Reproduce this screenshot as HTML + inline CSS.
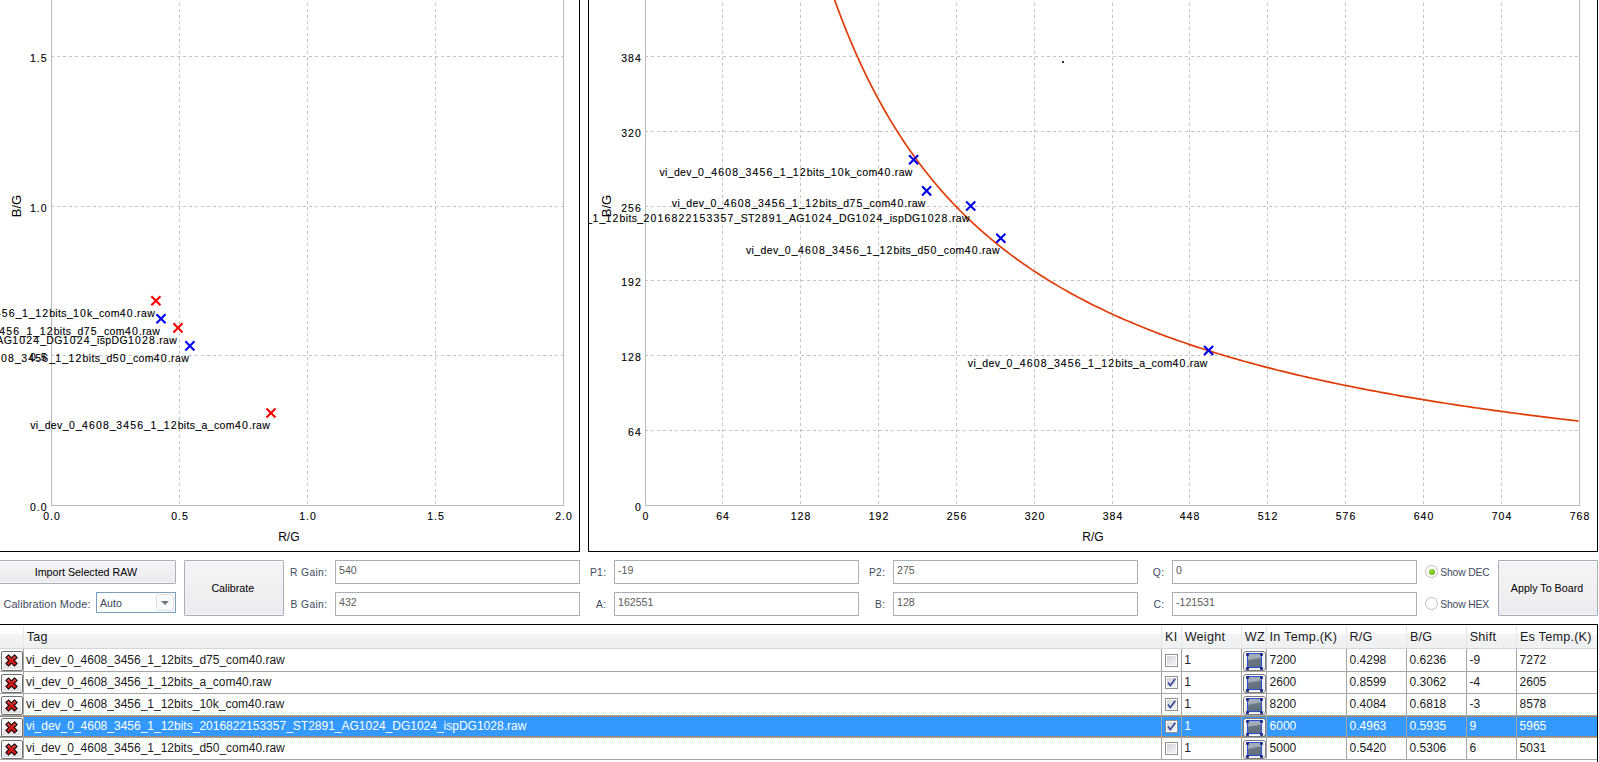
<!DOCTYPE html><html><head><meta charset="utf-8"><style>
*{margin:0;padding:0;box-sizing:border-box}
html,body{width:1599px;height:762px;overflow:hidden;background:#fff;position:relative;font-family:'Liberation Sans',sans-serif}
.a{position:absolute}
.t{position:absolute;white-space:pre;line-height:1}
.btn{position:absolute;border:1px solid #aaaeb8;border-radius:1px;background:linear-gradient(#f4f4f6,#ececf0);box-shadow:inset 0 1px 0 #fff,inset 0 -1px 0 #f6f6f8}
.tb{position:absolute;border:1px solid #a9afb7;background:#fff}
.lbl{color:#3d4b60;font-size:10.3px;letter-spacing:0.35px}
.val{color:#5c5c5c;font-size:10.6px}
.bt{color:#000;font-size:10.7px}
.hd{color:#1a1a1a;font-size:12.6px;letter-spacing:0.25px}
.rw{color:#1a1a1a;font-size:12px}
</style></head><body>
<svg class="a" style="left:0;top:0" width="1599" height="552" shape-rendering="crispEdges"><defs><clipPath id="cl"><rect x="0" y="0" width="580" height="552"/></clipPath><clipPath id="cr"><rect x="588" y="0" width="1011" height="552"/></clipPath></defs><g clip-path="url(#cl)"><line x1="179.5" y1="-3" x2="179.5" y2="505" stroke="#c4c4c4" stroke-width="1" stroke-dasharray="3 3"/><line x1="307.5" y1="-3" x2="307.5" y2="505" stroke="#c4c4c4" stroke-width="1" stroke-dasharray="3 3"/><line x1="435.5" y1="-3" x2="435.5" y2="505" stroke="#c4c4c4" stroke-width="1" stroke-dasharray="3 3"/><line x1="51" y1="56.5" x2="563" y2="56.5" stroke="#c4c4c4" stroke-width="1" stroke-dasharray="3 3"/><line x1="51" y1="206.5" x2="563" y2="206.5" stroke="#c4c4c4" stroke-width="1" stroke-dasharray="3 3"/><line x1="51" y1="355.5" x2="563" y2="355.5" stroke="#c4c4c4" stroke-width="1" stroke-dasharray="3 3"/><line x1="51.5" y1="0" x2="51.5" y2="506" stroke="#bcbcbc" stroke-width="1"/><line x1="563.5" y1="0" x2="563.5" y2="506" stroke="#bcbcbc" stroke-width="1"/><line x1="51" y1="505.5" x2="564" y2="505.5" stroke="#bcbcbc" stroke-width="1"/><line x1="579.5" y1="0" x2="579.5" y2="552" stroke="#000" stroke-width="1"/><line x1="0" y1="551.5" x2="580" y2="551.5" stroke="#000" stroke-width="1"/><text x="47.5" y="61.8" text-anchor="end" style="font-family:'Liberation Sans',sans-serif;font-size:10.5px;letter-spacing:1.0px" fill="#000" stroke="#000" stroke-width="0.12">1.5</text><text x="47.5" y="211.8" text-anchor="end" style="font-family:'Liberation Sans',sans-serif;font-size:10.5px;letter-spacing:1.0px" fill="#000" stroke="#000" stroke-width="0.12">1.0</text><text x="47.5" y="360.8" text-anchor="end" style="font-family:'Liberation Sans',sans-serif;font-size:10.5px;letter-spacing:1.0px" fill="#000" stroke="#000" stroke-width="0.12">0.5</text><text x="47.5" y="510.8" text-anchor="end" style="font-family:'Liberation Sans',sans-serif;font-size:10.5px;letter-spacing:1.0px" fill="#000" stroke="#000" stroke-width="0.12">0.0</text><text x="52.0" y="519.5" text-anchor="middle" style="font-family:'Liberation Sans',sans-serif;font-size:10.5px;letter-spacing:1.0px" fill="#000" stroke="#000" stroke-width="0.12">0.0</text><text x="180.0" y="519.5" text-anchor="middle" style="font-family:'Liberation Sans',sans-serif;font-size:10.5px;letter-spacing:1.0px" fill="#000" stroke="#000" stroke-width="0.12">0.5</text><text x="308.0" y="519.5" text-anchor="middle" style="font-family:'Liberation Sans',sans-serif;font-size:10.5px;letter-spacing:1.0px" fill="#000" stroke="#000" stroke-width="0.12">1.0</text><text x="436.0" y="519.5" text-anchor="middle" style="font-family:'Liberation Sans',sans-serif;font-size:10.5px;letter-spacing:1.0px" fill="#000" stroke="#000" stroke-width="0.12">1.5</text><text x="564.0" y="519.5" text-anchor="middle" style="font-family:'Liberation Sans',sans-serif;font-size:10.5px;letter-spacing:1.0px" fill="#000" stroke="#000" stroke-width="0.12">2.0</text><text x="288.8" y="541" text-anchor="middle" style="font-family:'Liberation Sans',sans-serif;font-size:12px" fill="#000">R/G</text><text transform="translate(21,206) rotate(-90)" text-anchor="middle" style="font-family:'Liberation Sans',sans-serif;font-size:13px" fill="#000">B/G</text></g><g clip-path="url(#cl)"><path d="M152.1,297.0L159.70000000000002,304.6M152.1,304.6L159.70000000000002,297.0" stroke="#ff0000" stroke-width="2.1" stroke-linecap="square" shape-rendering="geometricPrecision"/><text x="155.1" y="316.8" text-anchor="end" style="font-family:'Liberation Sans',sans-serif;font-size:10.5px;letter-spacing:0.69px" fill="#000" stroke="#000" stroke-width="0.12"><tspan style="letter-spacing:0.36px">vi_dev_</tspan><tspan style="letter-spacing:1.15px">0</tspan><tspan style="letter-spacing:0.36px">_</tspan><tspan style="letter-spacing:1.15px">4608</tspan><tspan style="letter-spacing:0.36px">_</tspan><tspan style="letter-spacing:1.15px">3456</tspan><tspan style="letter-spacing:0.36px">_</tspan><tspan style="letter-spacing:1.15px">1</tspan><tspan style="letter-spacing:0.36px">_</tspan><tspan style="letter-spacing:1.15px">12</tspan><tspan style="letter-spacing:0.36px">bits_</tspan><tspan style="letter-spacing:1.15px">10</tspan><tspan style="letter-spacing:0.36px">k_com</tspan><tspan style="letter-spacing:1.15px">40</tspan><tspan style="letter-spacing:0.36px">.raw</tspan></text><path d="M157.2,315.0L164.8,322.6M157.2,322.6L164.8,315.0" stroke="#0000ff" stroke-width="2.1" stroke-linecap="square" shape-rendering="geometricPrecision"/><text x="160.2" y="334.8" text-anchor="end" style="font-family:'Liberation Sans',sans-serif;font-size:10.5px;letter-spacing:0.69px" fill="#000" stroke="#000" stroke-width="0.12"><tspan style="letter-spacing:0.36px">vi_dev_</tspan><tspan style="letter-spacing:1.15px">0</tspan><tspan style="letter-spacing:0.36px">_</tspan><tspan style="letter-spacing:1.15px">4608</tspan><tspan style="letter-spacing:0.36px">_</tspan><tspan style="letter-spacing:1.15px">3456</tspan><tspan style="letter-spacing:0.36px">_</tspan><tspan style="letter-spacing:1.15px">1</tspan><tspan style="letter-spacing:0.36px">_</tspan><tspan style="letter-spacing:1.15px">12</tspan><tspan style="letter-spacing:0.36px">bits_d</tspan><tspan style="letter-spacing:1.15px">75</tspan><tspan style="letter-spacing:0.36px">_com</tspan><tspan style="letter-spacing:1.15px">40</tspan><tspan style="letter-spacing:0.36px">.raw</tspan></text><path d="M174.2,324.09999999999997L181.8,331.7M174.2,331.7L181.8,324.09999999999997" stroke="#ff0000" stroke-width="2.1" stroke-linecap="square" shape-rendering="geometricPrecision"/><text x="177.2" y="343.9" text-anchor="end" style="font-family:'Liberation Sans',sans-serif;font-size:10.5px;letter-spacing:0.69px" fill="#000" stroke="#000" stroke-width="0.12"><tspan style="letter-spacing:0.36px">vi_dev_</tspan><tspan style="letter-spacing:1.15px">0</tspan><tspan style="letter-spacing:0.36px">_</tspan><tspan style="letter-spacing:1.15px">4608</tspan><tspan style="letter-spacing:0.36px">_</tspan><tspan style="letter-spacing:1.15px">3456</tspan><tspan style="letter-spacing:0.36px">_</tspan><tspan style="letter-spacing:1.15px">1</tspan><tspan style="letter-spacing:0.36px">_</tspan><tspan style="letter-spacing:1.15px">12</tspan><tspan style="letter-spacing:0.36px">bits_</tspan><tspan style="letter-spacing:1.15px">2016822153357</tspan><tspan style="letter-spacing:0.36px">_ST</tspan><tspan style="letter-spacing:1.15px">2891</tspan><tspan style="letter-spacing:0.36px">_AG</tspan><tspan style="letter-spacing:1.15px">1024</tspan><tspan style="letter-spacing:0.36px">_DG</tspan><tspan style="letter-spacing:1.15px">1024</tspan><tspan style="letter-spacing:0.36px">_ispDG</tspan><tspan style="letter-spacing:1.15px">1028</tspan><tspan style="letter-spacing:0.36px">.raw</tspan></text><path d="M186.1,342.09999999999997L193.70000000000002,349.7M186.1,349.7L193.70000000000002,342.09999999999997" stroke="#0000ff" stroke-width="2.1" stroke-linecap="square" shape-rendering="geometricPrecision"/><text x="189.1" y="361.9" text-anchor="end" style="font-family:'Liberation Sans',sans-serif;font-size:10.5px;letter-spacing:0.69px" fill="#000" stroke="#000" stroke-width="0.12"><tspan style="letter-spacing:0.36px">vi_dev_</tspan><tspan style="letter-spacing:1.15px">0</tspan><tspan style="letter-spacing:0.36px">_</tspan><tspan style="letter-spacing:1.15px">4608</tspan><tspan style="letter-spacing:0.36px">_</tspan><tspan style="letter-spacing:1.15px">3456</tspan><tspan style="letter-spacing:0.36px">_</tspan><tspan style="letter-spacing:1.15px">1</tspan><tspan style="letter-spacing:0.36px">_</tspan><tspan style="letter-spacing:1.15px">12</tspan><tspan style="letter-spacing:0.36px">bits_d</tspan><tspan style="letter-spacing:1.15px">50</tspan><tspan style="letter-spacing:0.36px">_com</tspan><tspan style="letter-spacing:1.15px">40</tspan><tspan style="letter-spacing:0.36px">.raw</tspan></text><path d="M267.2,409.2L274.8,416.8M267.2,416.8L274.8,409.2" stroke="#ff0000" stroke-width="2.1" stroke-linecap="square" shape-rendering="geometricPrecision"/><text x="270.2" y="429" text-anchor="end" style="font-family:'Liberation Sans',sans-serif;font-size:10.5px;letter-spacing:0.69px" fill="#000" stroke="#000" stroke-width="0.12"><tspan style="letter-spacing:0.36px">vi_dev_</tspan><tspan style="letter-spacing:1.15px">0</tspan><tspan style="letter-spacing:0.36px">_</tspan><tspan style="letter-spacing:1.15px">4608</tspan><tspan style="letter-spacing:0.36px">_</tspan><tspan style="letter-spacing:1.15px">3456</tspan><tspan style="letter-spacing:0.36px">_</tspan><tspan style="letter-spacing:1.15px">1</tspan><tspan style="letter-spacing:0.36px">_</tspan><tspan style="letter-spacing:1.15px">12</tspan><tspan style="letter-spacing:0.36px">bits_a_com</tspan><tspan style="letter-spacing:1.15px">40</tspan><tspan style="letter-spacing:0.36px">.raw</tspan></text></g><g clip-path="url(#cr)"><line x1="722.5" y1="-3" x2="722.5" y2="505" stroke="#c4c4c4" stroke-width="1" stroke-dasharray="3 3"/><line x1="800.5" y1="-3" x2="800.5" y2="505" stroke="#c4c4c4" stroke-width="1" stroke-dasharray="3 3"/><line x1="878.5" y1="-3" x2="878.5" y2="505" stroke="#c4c4c4" stroke-width="1" stroke-dasharray="3 3"/><line x1="956.5" y1="-3" x2="956.5" y2="505" stroke="#c4c4c4" stroke-width="1" stroke-dasharray="3 3"/><line x1="1034.5" y1="-3" x2="1034.5" y2="505" stroke="#c4c4c4" stroke-width="1" stroke-dasharray="3 3"/><line x1="1112.5" y1="-3" x2="1112.5" y2="505" stroke="#c4c4c4" stroke-width="1" stroke-dasharray="3 3"/><line x1="1189.5" y1="-3" x2="1189.5" y2="505" stroke="#c4c4c4" stroke-width="1" stroke-dasharray="3 3"/><line x1="1267.5" y1="-3" x2="1267.5" y2="505" stroke="#c4c4c4" stroke-width="1" stroke-dasharray="3 3"/><line x1="1345.5" y1="-3" x2="1345.5" y2="505" stroke="#c4c4c4" stroke-width="1" stroke-dasharray="3 3"/><line x1="1423.5" y1="-3" x2="1423.5" y2="505" stroke="#c4c4c4" stroke-width="1" stroke-dasharray="3 3"/><line x1="1501.5" y1="-3" x2="1501.5" y2="505" stroke="#c4c4c4" stroke-width="1" stroke-dasharray="3 3"/><line x1="645" y1="56.5" x2="1579" y2="56.5" stroke="#c4c4c4" stroke-width="1" stroke-dasharray="3 3"/><line x1="645" y1="131.5" x2="1579" y2="131.5" stroke="#c4c4c4" stroke-width="1" stroke-dasharray="3 3"/><line x1="645" y1="206.5" x2="1579" y2="206.5" stroke="#c4c4c4" stroke-width="1" stroke-dasharray="3 3"/><line x1="645" y1="280.5" x2="1579" y2="280.5" stroke="#c4c4c4" stroke-width="1" stroke-dasharray="3 3"/><line x1="645" y1="355.5" x2="1579" y2="355.5" stroke="#c4c4c4" stroke-width="1" stroke-dasharray="3 3"/><line x1="645" y1="430.5" x2="1579" y2="430.5" stroke="#c4c4c4" stroke-width="1" stroke-dasharray="3 3"/><line x1="645.5" y1="0" x2="645.5" y2="506" stroke="#bcbcbc" stroke-width="1"/><line x1="1579.5" y1="0" x2="1579.5" y2="506" stroke="#bcbcbc" stroke-width="1"/><line x1="645" y1="505.5" x2="1580" y2="505.5" stroke="#bcbcbc" stroke-width="1"/><line x1="588.5" y1="0" x2="588.5" y2="552" stroke="#000" stroke-width="1"/><line x1="1597.5" y1="0" x2="1597.5" y2="552" stroke="#000" stroke-width="1"/><line x1="588" y1="551.5" x2="1598" y2="551.5" stroke="#000" stroke-width="1"/><text x="641.8" y="61.8" text-anchor="end" style="font-family:'Liberation Sans',sans-serif;font-size:10.5px;letter-spacing:1.0px" fill="#000" stroke="#000" stroke-width="0.12">384</text><text x="641.8" y="136.8" text-anchor="end" style="font-family:'Liberation Sans',sans-serif;font-size:10.5px;letter-spacing:1.0px" fill="#000" stroke="#000" stroke-width="0.12">320</text><text x="641.8" y="211.8" text-anchor="end" style="font-family:'Liberation Sans',sans-serif;font-size:10.5px;letter-spacing:1.0px" fill="#000" stroke="#000" stroke-width="0.12">256</text><text x="641.8" y="285.8" text-anchor="end" style="font-family:'Liberation Sans',sans-serif;font-size:10.5px;letter-spacing:1.0px" fill="#000" stroke="#000" stroke-width="0.12">192</text><text x="641.8" y="360.8" text-anchor="end" style="font-family:'Liberation Sans',sans-serif;font-size:10.5px;letter-spacing:1.0px" fill="#000" stroke="#000" stroke-width="0.12">128</text><text x="641.8" y="435.8" text-anchor="end" style="font-family:'Liberation Sans',sans-serif;font-size:10.5px;letter-spacing:1.0px" fill="#000" stroke="#000" stroke-width="0.12">64</text><text x="641.8" y="510.8" text-anchor="end" style="font-family:'Liberation Sans',sans-serif;font-size:10.5px;letter-spacing:1.0px" fill="#000" stroke="#000" stroke-width="0.12">0</text><text x="646.0" y="519.5" text-anchor="middle" style="font-family:'Liberation Sans',sans-serif;font-size:10.5px;letter-spacing:1.0px" fill="#000" stroke="#000" stroke-width="0.12">0</text><text x="723.0" y="519.5" text-anchor="middle" style="font-family:'Liberation Sans',sans-serif;font-size:10.5px;letter-spacing:1.0px" fill="#000" stroke="#000" stroke-width="0.12">64</text><text x="801.0" y="519.5" text-anchor="middle" style="font-family:'Liberation Sans',sans-serif;font-size:10.5px;letter-spacing:1.0px" fill="#000" stroke="#000" stroke-width="0.12">128</text><text x="879.0" y="519.5" text-anchor="middle" style="font-family:'Liberation Sans',sans-serif;font-size:10.5px;letter-spacing:1.0px" fill="#000" stroke="#000" stroke-width="0.12">192</text><text x="957.0" y="519.5" text-anchor="middle" style="font-family:'Liberation Sans',sans-serif;font-size:10.5px;letter-spacing:1.0px" fill="#000" stroke="#000" stroke-width="0.12">256</text><text x="1035.0" y="519.5" text-anchor="middle" style="font-family:'Liberation Sans',sans-serif;font-size:10.5px;letter-spacing:1.0px" fill="#000" stroke="#000" stroke-width="0.12">320</text><text x="1113.0" y="519.5" text-anchor="middle" style="font-family:'Liberation Sans',sans-serif;font-size:10.5px;letter-spacing:1.0px" fill="#000" stroke="#000" stroke-width="0.12">384</text><text x="1190.0" y="519.5" text-anchor="middle" style="font-family:'Liberation Sans',sans-serif;font-size:10.5px;letter-spacing:1.0px" fill="#000" stroke="#000" stroke-width="0.12">448</text><text x="1268.0" y="519.5" text-anchor="middle" style="font-family:'Liberation Sans',sans-serif;font-size:10.5px;letter-spacing:1.0px" fill="#000" stroke="#000" stroke-width="0.12">512</text><text x="1346.0" y="519.5" text-anchor="middle" style="font-family:'Liberation Sans',sans-serif;font-size:10.5px;letter-spacing:1.0px" fill="#000" stroke="#000" stroke-width="0.12">576</text><text x="1424.0" y="519.5" text-anchor="middle" style="font-family:'Liberation Sans',sans-serif;font-size:10.5px;letter-spacing:1.0px" fill="#000" stroke="#000" stroke-width="0.12">640</text><text x="1502.0" y="519.5" text-anchor="middle" style="font-family:'Liberation Sans',sans-serif;font-size:10.5px;letter-spacing:1.0px" fill="#000" stroke="#000" stroke-width="0.12">704</text><text x="1580.0" y="519.5" text-anchor="middle" style="font-family:'Liberation Sans',sans-serif;font-size:10.5px;letter-spacing:1.0px" fill="#000" stroke="#000" stroke-width="0.12">768</text><text x="1093" y="541" text-anchor="middle" style="font-family:'Liberation Sans',sans-serif;font-size:12px" fill="#000">R/G</text><text transform="translate(611,206) rotate(-90)" text-anchor="middle" style="font-family:'Liberation Sans',sans-serif;font-size:13px" fill="#000">B/G</text><polyline points="833.0,-4.67 834.0,-1.84 835.0,0.95 836.0,3.72 837.0,6.46 838.0,9.17 839.0,11.85 840.0,14.51 841.0,17.14 842.0,19.74 843.0,22.31 844.0,24.86 845.0,27.38 846.0,29.88 847.0,32.35 848.0,34.80 849.0,37.23 850.0,39.63 851.0,42.01 852.0,44.36 853.0,46.69 854.0,49.00 855.0,51.29 856.0,53.55 857.0,55.80 858.0,58.02 859.0,60.22 860.0,62.41 861.0,64.57 862.0,66.71 863.0,68.83 864.0,70.93 865.0,73.02 866.0,75.08 867.0,77.13 868.0,79.15 869.0,81.16 870.0,83.15 871.0,85.13 872.0,87.08 873.0,89.02 874.0,90.94 875.0,92.85 876.0,94.74 877.0,96.61 878.0,98.47 879.0,100.31 880.0,102.13 881.0,103.94 882.0,105.74 883.0,107.51 884.0,109.28 885.0,111.03 886.0,112.76 887.0,114.48 888.0,116.19 889.0,117.88 890.0,119.56 891.0,121.22 892.0,122.87 893.0,124.51 894.0,126.14 895.0,127.75 896.0,129.35 897.0,130.93 898.0,132.50 899.0,134.07 900.0,135.61 901.0,137.15 902.0,138.67 903.0,140.19 904.0,141.69 905.0,143.18 906.0,144.66 907.0,146.12 908.0,147.58 909.0,149.02 910.0,150.46 911.0,151.88 912.0,153.29 913.0,154.69 914.0,156.08 915.0,157.46 916.0,158.83 917.0,160.19 918.0,161.54 919.0,162.89 920.0,164.22 921.0,165.54 922.0,166.85 923.0,168.15 924.0,169.44 925.0,170.73 926.0,172.00 927.0,173.27 928.0,174.52 929.0,175.77 930.0,177.01 931.0,178.24 932.0,179.46 933.0,180.67 934.0,181.88 935.0,183.07 936.0,184.26 937.0,185.44 938.0,186.61 939.0,187.78 940.0,188.93 941.0,190.08 942.0,191.22 943.0,192.35 944.0,193.48 945.0,194.60 946.0,195.71 947.0,196.81 948.0,197.90 949.0,198.99 950.0,200.07 951.0,201.15 952.0,202.21 953.0,203.27 954.0,204.33 955.0,205.37 956.0,206.41 957.0,207.45 958.0,208.47 959.0,209.49 960.0,210.51 961.0,211.51 962.0,212.51 963.0,213.51 964.0,214.49 965.0,215.48 966.0,216.45 967.0,217.42 968.0,218.39 969.0,219.34 970.0,220.29 971.0,221.24 972.0,222.18 973.0,223.11 974.0,224.04 975.0,224.97 976.0,225.88 977.0,226.80 978.0,227.70 979.0,228.60 980.0,229.50 981.0,230.39 982.0,231.27 983.0,232.15 984.0,233.03 985.0,233.90 986.0,234.76 987.0,235.62 988.0,236.47 989.0,237.32 990.0,238.17 991.0,239.01 992.0,239.84 993.0,240.67 994.0,241.50 995.0,242.32 996.0,243.13 997.0,243.94 998.0,244.75 999.0,245.55 1000.0,246.35 1003.0,248.71 1006.0,251.04 1009.0,253.32 1012.0,255.57 1015.0,257.79 1018.0,259.96 1021.0,262.11 1024.0,264.22 1027.0,266.29 1030.0,268.33 1033.0,270.35 1036.0,272.33 1039.0,274.28 1042.0,276.20 1045.0,278.09 1048.0,279.95 1051.0,281.79 1054.0,283.60 1057.0,285.38 1060.0,287.14 1063.0,288.87 1066.0,290.58 1069.0,292.26 1072.0,293.92 1075.0,295.56 1078.0,297.17 1081.0,298.76 1084.0,300.33 1087.0,301.88 1090.0,303.40 1093.0,304.91 1096.0,306.40 1099.0,307.86 1102.0,309.31 1105.0,310.74 1108.0,312.15 1111.0,313.54 1114.0,314.92 1117.0,316.27 1120.0,317.61 1123.0,318.94 1126.0,320.24 1129.0,321.53 1132.0,322.81 1135.0,324.06 1138.0,325.31 1141.0,326.54 1144.0,327.75 1147.0,328.95 1150.0,330.13 1153.0,331.30 1156.0,332.46 1159.0,333.60 1162.0,334.73 1165.0,335.85 1168.0,336.95 1171.0,338.04 1174.0,339.12 1177.0,340.19 1180.0,341.25 1183.0,342.29 1186.0,343.32 1189.0,344.34 1192.0,345.35 1195.0,346.35 1198.0,347.33 1201.0,348.31 1204.0,349.28 1207.0,350.23 1210.0,351.18 1213.0,352.11 1216.0,353.04 1219.0,353.95 1222.0,354.86 1225.0,355.76 1228.0,356.65 1231.0,357.52 1234.0,358.39 1237.0,359.25 1240.0,360.11 1243.0,360.95 1246.0,361.79 1249.0,362.61 1252.0,363.43 1255.0,364.24 1258.0,365.04 1261.0,365.84 1264.0,366.63 1267.0,367.41 1270.0,368.18 1273.0,368.94 1276.0,369.70 1279.0,370.45 1282.0,371.19 1285.0,371.93 1288.0,372.66 1291.0,373.38 1294.0,374.10 1297.0,374.81 1300.0,375.51 1303.0,376.21 1306.0,376.90 1309.0,377.58 1312.0,378.26 1315.0,378.93 1318.0,379.60 1321.0,380.25 1324.0,380.91 1327.0,381.56 1330.0,382.20 1333.0,382.84 1336.0,383.47 1339.0,384.09 1342.0,384.71 1345.0,385.33 1348.0,385.94 1351.0,386.54 1354.0,387.14 1357.0,387.74 1360.0,388.33 1363.0,388.91 1366.0,389.49 1369.0,390.07 1372.0,390.64 1375.0,391.20 1378.0,391.76 1381.0,392.32 1384.0,392.87 1387.0,393.42 1390.0,393.96 1393.0,394.50 1396.0,395.03 1399.0,395.56 1402.0,396.09 1405.0,396.61 1408.0,397.13 1411.0,397.64 1414.0,398.15 1417.0,398.65 1420.0,399.16 1423.0,399.65 1426.0,400.15 1429.0,400.64 1432.0,401.12 1435.0,401.61 1438.0,402.09 1441.0,402.56 1444.0,403.03 1447.0,403.50 1450.0,403.97 1453.0,404.43 1456.0,404.88 1459.0,405.34 1462.0,405.79 1465.0,406.24 1468.0,406.68 1471.0,407.12 1474.0,407.56 1477.0,408.00 1480.0,408.43 1483.0,408.86 1486.0,409.28 1489.0,409.71 1492.0,410.13 1495.0,410.54 1498.0,410.96 1501.0,411.37 1504.0,411.78 1507.0,412.18 1510.0,412.58 1513.0,412.98 1516.0,413.38 1519.0,413.77 1522.0,414.16 1525.0,414.55 1528.0,414.94 1531.0,415.32 1534.0,415.70 1537.0,416.08 1540.0,416.46 1543.0,416.83 1546.0,417.20 1549.0,417.57 1552.0,417.94 1555.0,418.30 1558.0,418.66 1561.0,419.02 1564.0,419.38 1567.0,419.73 1570.0,420.08 1573.0,420.43 1576.0,420.78 1578.5,421.07" fill="none" stroke="#e03c08" stroke-width="1.7" shape-rendering="geometricPrecision"/><rect x="1062" y="61" width="2" height="2" fill="#333"/><path d="M909.8000000000001,156.0L917.4,163.60000000000002M909.8000000000001,163.60000000000002L917.4,156.0" stroke="#0000e6" stroke-width="2.1" stroke-linecap="square" shape-rendering="geometricPrecision"/><text x="912.8000000000001" y="176.0" text-anchor="end" style="font-family:'Liberation Sans',sans-serif;font-size:10.5px;letter-spacing:0.69px" fill="#000" stroke="#000" stroke-width="0.12"><tspan style="letter-spacing:0.36px">vi_dev_</tspan><tspan style="letter-spacing:1.15px">0</tspan><tspan style="letter-spacing:0.36px">_</tspan><tspan style="letter-spacing:1.15px">4608</tspan><tspan style="letter-spacing:0.36px">_</tspan><tspan style="letter-spacing:1.15px">3456</tspan><tspan style="letter-spacing:0.36px">_</tspan><tspan style="letter-spacing:1.15px">1</tspan><tspan style="letter-spacing:0.36px">_</tspan><tspan style="letter-spacing:1.15px">12</tspan><tspan style="letter-spacing:0.36px">bits_</tspan><tspan style="letter-spacing:1.15px">10</tspan><tspan style="letter-spacing:0.36px">k_com</tspan><tspan style="letter-spacing:1.15px">40</tspan><tspan style="letter-spacing:0.36px">.raw</tspan></text><path d="M922.8000000000001,187.1L930.4,194.70000000000002M922.8000000000001,194.70000000000002L930.4,187.1" stroke="#0000e6" stroke-width="2.1" stroke-linecap="square" shape-rendering="geometricPrecision"/><text x="925.8000000000001" y="207.1" text-anchor="end" style="font-family:'Liberation Sans',sans-serif;font-size:10.5px;letter-spacing:0.69px" fill="#000" stroke="#000" stroke-width="0.12"><tspan style="letter-spacing:0.36px">vi_dev_</tspan><tspan style="letter-spacing:1.15px">0</tspan><tspan style="letter-spacing:0.36px">_</tspan><tspan style="letter-spacing:1.15px">4608</tspan><tspan style="letter-spacing:0.36px">_</tspan><tspan style="letter-spacing:1.15px">3456</tspan><tspan style="letter-spacing:0.36px">_</tspan><tspan style="letter-spacing:1.15px">1</tspan><tspan style="letter-spacing:0.36px">_</tspan><tspan style="letter-spacing:1.15px">12</tspan><tspan style="letter-spacing:0.36px">bits_d</tspan><tspan style="letter-spacing:1.15px">75</tspan><tspan style="letter-spacing:0.36px">_com</tspan><tspan style="letter-spacing:1.15px">40</tspan><tspan style="letter-spacing:0.36px">.raw</tspan></text><path d="M966.9000000000001,202.2L974.5,209.8M966.9000000000001,209.8L974.5,202.2" stroke="#0000e6" stroke-width="2.1" stroke-linecap="square" shape-rendering="geometricPrecision"/><text x="969.9000000000001" y="222.2" text-anchor="end" style="font-family:'Liberation Sans',sans-serif;font-size:10.5px;letter-spacing:0.69px" fill="#000" stroke="#000" stroke-width="0.12"><tspan style="letter-spacing:0.36px">vi_dev_</tspan><tspan style="letter-spacing:1.15px">0</tspan><tspan style="letter-spacing:0.36px">_</tspan><tspan style="letter-spacing:1.15px">4608</tspan><tspan style="letter-spacing:0.36px">_</tspan><tspan style="letter-spacing:1.15px">3456</tspan><tspan style="letter-spacing:0.36px">_</tspan><tspan style="letter-spacing:1.15px">1</tspan><tspan style="letter-spacing:0.36px">_</tspan><tspan style="letter-spacing:1.15px">12</tspan><tspan style="letter-spacing:0.36px">bits_</tspan><tspan style="letter-spacing:1.15px">2016822153357</tspan><tspan style="letter-spacing:0.36px">_ST</tspan><tspan style="letter-spacing:1.15px">2891</tspan><tspan style="letter-spacing:0.36px">_AG</tspan><tspan style="letter-spacing:1.15px">1024</tspan><tspan style="letter-spacing:0.36px">_DG</tspan><tspan style="letter-spacing:1.15px">1024</tspan><tspan style="letter-spacing:0.36px">_ispDG</tspan><tspan style="letter-spacing:1.15px">1028</tspan><tspan style="letter-spacing:0.36px">.raw</tspan></text><path d="M997.0,234.39999999999998L1004.5999999999999,242.0M997.0,242.0L1004.5999999999999,234.39999999999998" stroke="#0000e6" stroke-width="2.1" stroke-linecap="square" shape-rendering="geometricPrecision"/><text x="1000.0" y="254.39999999999998" text-anchor="end" style="font-family:'Liberation Sans',sans-serif;font-size:10.5px;letter-spacing:0.69px" fill="#000" stroke="#000" stroke-width="0.12"><tspan style="letter-spacing:0.36px">vi_dev_</tspan><tspan style="letter-spacing:1.15px">0</tspan><tspan style="letter-spacing:0.36px">_</tspan><tspan style="letter-spacing:1.15px">4608</tspan><tspan style="letter-spacing:0.36px">_</tspan><tspan style="letter-spacing:1.15px">3456</tspan><tspan style="letter-spacing:0.36px">_</tspan><tspan style="letter-spacing:1.15px">1</tspan><tspan style="letter-spacing:0.36px">_</tspan><tspan style="letter-spacing:1.15px">12</tspan><tspan style="letter-spacing:0.36px">bits_d</tspan><tspan style="letter-spacing:1.15px">50</tspan><tspan style="letter-spacing:0.36px">_com</tspan><tspan style="letter-spacing:1.15px">40</tspan><tspan style="letter-spacing:0.36px">.raw</tspan></text><path d="M1204.8,346.7L1212.3999999999999,354.3M1204.8,354.3L1212.3999999999999,346.7" stroke="#0000e6" stroke-width="2.1" stroke-linecap="square" shape-rendering="geometricPrecision"/><text x="1207.8" y="366.7" text-anchor="end" style="font-family:'Liberation Sans',sans-serif;font-size:10.5px;letter-spacing:0.69px" fill="#000" stroke="#000" stroke-width="0.12"><tspan style="letter-spacing:0.36px">vi_dev_</tspan><tspan style="letter-spacing:1.15px">0</tspan><tspan style="letter-spacing:0.36px">_</tspan><tspan style="letter-spacing:1.15px">4608</tspan><tspan style="letter-spacing:0.36px">_</tspan><tspan style="letter-spacing:1.15px">3456</tspan><tspan style="letter-spacing:0.36px">_</tspan><tspan style="letter-spacing:1.15px">1</tspan><tspan style="letter-spacing:0.36px">_</tspan><tspan style="letter-spacing:1.15px">12</tspan><tspan style="letter-spacing:0.36px">bits_a_com</tspan><tspan style="letter-spacing:1.15px">40</tspan><tspan style="letter-spacing:0.36px">.raw</tspan></text></g></svg>
<div class="btn" style="left:-5px;top:560px;width:181px;height:24px;"></div>
<div class="t bt" style="left:-114.1px;width:400px;text-align:center;top:566.84px;">Import Selected RAW</div>
<div class="t lbl" style="left:3.5px;top:598.83px;font-size:10.9px;letter-spacing:0.1px">Calibration Mode:</div>
<div class="a" style="left:96px;top:592px;width:80px;height:21px;border:1px solid #7b9ebd;background:#fff"></div>
<div class="t val" style="left:100px;top:597.53px;color:#3a4558">Auto</div>
<div class="a" style="left:156px;top:594px;width:18px;height:17px;border:1px solid #dfe3e8;border-radius:2px;background:#f8f9fa"></div>
<div class="a" style="left:161px;top:601px;width:0;height:0;border-left:4px solid transparent;border-right:4px solid transparent;border-top:4px solid #6d7683"></div>
<div class="btn" style="left:184px;top:560px;width:100px;height:56px;"></div>
<div class="t bt" style="left:32.80000000000001px;width:400px;text-align:center;top:583.23px;">Calibrate</div>
<div class="t lbl" style="right:1271.6px;top:568.48px;">R Gain:</div>
<div class="t lbl" style="right:1271.6px;top:600.28px;">B Gain:</div>
<div class="tb" style="left:335px;top:560px;width:245px;height:24px;"></div>
<div class="tb" style="left:335px;top:592px;width:245px;height:24px;"></div>
<div class="t val" style="left:339px;top:565.43px;">540</div>
<div class="t val" style="left:339px;top:597.43px;">432</div>
<div class="t lbl" style="right:992.6px;top:568.48px;">P1:</div>
<div class="t lbl" style="right:992.6px;top:600.28px;">A:</div>
<div class="tb" style="left:614px;top:560px;width:245px;height:24px;"></div>
<div class="tb" style="left:614px;top:592px;width:245px;height:24px;"></div>
<div class="t val" style="left:618px;top:565.43px;">-19</div>
<div class="t val" style="left:618px;top:597.43px;">162551</div>
<div class="t lbl" style="right:713.6px;top:568.48px;">P2:</div>
<div class="t lbl" style="right:713.6px;top:600.28px;">B:</div>
<div class="tb" style="left:893px;top:560px;width:245px;height:24px;"></div>
<div class="tb" style="left:893px;top:592px;width:245px;height:24px;"></div>
<div class="t val" style="left:897px;top:565.43px;">275</div>
<div class="t val" style="left:897px;top:597.43px;">128</div>
<div class="t lbl" style="right:434.5999999999999px;top:568.48px;">Q:</div>
<div class="t lbl" style="right:434.5999999999999px;top:600.28px;">C:</div>
<div class="tb" style="left:1172px;top:560px;width:245px;height:24px;"></div>
<div class="tb" style="left:1172px;top:592px;width:245px;height:24px;"></div>
<div class="t val" style="left:1176px;top:565.43px;">0</div>
<div class="t val" style="left:1176px;top:597.43px;">-121531</div>
<div class="a" style="left:1425px;top:565px;width:13px;height:13px;border-radius:50%;border:1px solid #b9bec5;background:#fff"></div>
<div class="a" style="left:1428.5px;top:568.5px;width:6px;height:6px;border-radius:50%;background:radial-gradient(circle at 40% 35%,#9be03a,#5aa20a)"></div>
<div class="a" style="left:1425px;top:597px;width:13px;height:13px;border-radius:50%;border:1px solid #b9bec5;background:#fff"></div>
<div class="t lbl" style="left:1440.3px;top:568.33px;letter-spacing:-0.15px">Show DEC</div>
<div class="t lbl" style="left:1440.3px;top:600.13px;letter-spacing:-0.15px">Show HEX</div>
<div class="btn" style="left:1498px;top:560px;width:100px;height:56px;"></div>
<div class="t bt" style="left:1347px;width:400px;text-align:center;top:582.94px;">Apply To Board</div>
<div class="a" style="left:0px;top:624px;width:1598px;height:1px;background:#000"></div>
<div class="a" style="left:1597px;top:624px;width:1px;height:138px;background:#000"></div>
<div class="a" style="left:0px;top:625px;width:1597px;height:9px;background:#fff"></div>
<div class="a" style="left:0px;top:634px;width:1597px;height:14px;background:linear-gradient(#f3f4f6,#eff0f2)"></div>
<div class="a" style="left:0px;top:648px;width:1597px;height:1px;background:#d6d6d6"></div>
<div class="a" style="left:23px;top:626px;width:1px;height:22px;background:#e6e7e9"></div>
<div class="a" style="left:1161px;top:626px;width:1px;height:22px;background:#e6e7e9"></div>
<div class="a" style="left:1181px;top:626px;width:1px;height:22px;background:#e6e7e9"></div>
<div class="a" style="left:1241px;top:626px;width:1px;height:22px;background:#e6e7e9"></div>
<div class="a" style="left:1266px;top:626px;width:1px;height:22px;background:#e6e7e9"></div>
<div class="a" style="left:1346px;top:626px;width:1px;height:22px;background:#e6e7e9"></div>
<div class="a" style="left:1406px;top:626px;width:1px;height:22px;background:#e6e7e9"></div>
<div class="a" style="left:1466px;top:626px;width:1px;height:22px;background:#e6e7e9"></div>
<div class="a" style="left:1516px;top:626px;width:1px;height:22px;background:#e6e7e9"></div>
<div class="t hd" style="left:26.8px;top:630.93px;">Tag</div>
<div class="t hd" style="left:1165.0px;top:630.93px;">KI</div>
<div class="t hd" style="left:1184.7px;top:630.93px;">Weight</div>
<div class="t hd" style="left:1244.8px;top:630.93px;">WZ</div>
<div class="t hd" style="left:1269.6px;top:630.93px;">In Temp.(K)</div>
<div class="t hd" style="left:1349.5px;top:630.93px;">R/G</div>
<div class="t hd" style="left:1409.9px;top:630.93px;">B/G</div>
<div class="t hd" style="left:1469.7px;top:630.93px;">Shift</div>
<div class="t hd" style="left:1519.9px;top:630.93px;">Es Temp.(K)</div>
<div class="a" style="left:0px;top:671px;width:1597px;height:1px;background:#a5a5a5"></div>
<div class="a" style="left:23px;top:649px;width:1px;height:22px;background:#a5a5a5"></div>
<div class="a" style="left:1161px;top:649px;width:1px;height:22px;background:#a5a5a5"></div>
<div class="a" style="left:1181px;top:649px;width:1px;height:22px;background:#a5a5a5"></div>
<div class="a" style="left:1241px;top:649px;width:1px;height:22px;background:#a5a5a5"></div>
<div class="a" style="left:1266px;top:649px;width:1px;height:22px;background:#a5a5a5"></div>
<div class="a" style="left:1346px;top:649px;width:1px;height:22px;background:#a5a5a5"></div>
<div class="a" style="left:1406px;top:649px;width:1px;height:22px;background:#a5a5a5"></div>
<div class="a" style="left:1466px;top:649px;width:1px;height:22px;background:#a5a5a5"></div>
<div class="a" style="left:1516px;top:649px;width:1px;height:22px;background:#a5a5a5"></div>
<div class="t rw" style="left:25.9px;top:653.94px;color:#1a1a1a">vi_dev_0_4608_3456_1_12bits_d75_com40.raw</div>
<div class="t rw" style="left:1184.3px;top:653.94px;color:#1a1a1a">1</div>
<div class="t rw" style="left:1269.6px;top:653.94px;color:#1a1a1a">7200</div>
<div class="t rw" style="left:1349.6px;top:653.94px;color:#1a1a1a">0.4298</div>
<div class="t rw" style="left:1409.6px;top:653.94px;color:#1a1a1a">0.6236</div>
<div class="t rw" style="left:1469.6px;top:653.94px;color:#1a1a1a">-9</div>
<div class="t rw" style="left:1519.6px;top:653.94px;color:#1a1a1a">7272</div>
<div class="a" style="left:1px;top:651px;width:22px;height:20px;border:1px solid #6f6f6f;border-radius:2px;background:linear-gradient(#fbfbfb,#f0f0f0 50%,#dedede);box-shadow:inset 0 0 0 1px #fff"></div>
<svg class="a" style="left:4.5px;top:654.2px" width="13" height="13" viewBox="0 0 13 13"><defs><linearGradient id="rg0" x1="0" y1="0" x2="0" y2="1"><stop offset="0" stop-color="#e86666"/><stop offset="0.45" stop-color="#cc1616"/><stop offset="1" stop-color="#dc1a1a"/></linearGradient></defs><polygon points="9.43,0.95 12.05,3.57 9.12,6.50 12.05,9.43 9.43,12.05 6.50,9.12 3.57,12.05 0.95,9.43 3.88,6.50 0.95,3.57 3.57,0.95 6.50,3.88" fill="url(#rg0)" stroke="#1a0000" stroke-width="1.1" stroke-linejoin="miter"/></svg>
<div class="a" style="left:1165px;top:654px;width:13px;height:13px;border:1px solid #8f8f8f;background:#fff"><div class="a" style="left:1px;top:1px;width:9px;height:9px;background:linear-gradient(135deg,#cfd2d6,#f4f5f6)"></div></div>
<div class="a" style="left:1243px;top:651px;width:23px;height:20px;border:1px solid #7a7a7a;border-radius:3px;background:linear-gradient(#fbfbfb,#e6e6e6);box-shadow:inset 0 0 0 1px #fff"></div>
<div class="a" style="left:1246.5px;top:653px;width:15px;height:15px;border:1.5px solid #2d4fd8;background:linear-gradient(170deg,#a4acb4 0 35%,#6a7886 45%,#5f6d7b)"></div>
<div class="a" style="left:1246px;top:652.5px;width:3px;height:3px;background:#1c2a8c;border-radius:1px"></div>
<div class="a" style="left:1260px;top:652.5px;width:3px;height:3px;background:#1c2a8c;border-radius:1px"></div>
<div class="a" style="left:1246px;top:666.5px;width:3px;height:3px;background:#1c2a8c;border-radius:1px"></div>
<div class="a" style="left:1260px;top:666.5px;width:3px;height:3px;background:#1c2a8c;border-radius:1px"></div>
<div class="a" style="left:0px;top:693px;width:1597px;height:1px;background:#a5a5a5"></div>
<div class="a" style="left:23px;top:672px;width:1px;height:21px;background:#a5a5a5"></div>
<div class="a" style="left:1161px;top:672px;width:1px;height:21px;background:#a5a5a5"></div>
<div class="a" style="left:1181px;top:672px;width:1px;height:21px;background:#a5a5a5"></div>
<div class="a" style="left:1241px;top:672px;width:1px;height:21px;background:#a5a5a5"></div>
<div class="a" style="left:1266px;top:672px;width:1px;height:21px;background:#a5a5a5"></div>
<div class="a" style="left:1346px;top:672px;width:1px;height:21px;background:#a5a5a5"></div>
<div class="a" style="left:1406px;top:672px;width:1px;height:21px;background:#a5a5a5"></div>
<div class="a" style="left:1466px;top:672px;width:1px;height:21px;background:#a5a5a5"></div>
<div class="a" style="left:1516px;top:672px;width:1px;height:21px;background:#a5a5a5"></div>
<div class="t rw" style="left:25.9px;top:675.94px;color:#1a1a1a">vi_dev_0_4608_3456_1_12bits_a_com40.raw</div>
<div class="t rw" style="left:1184.3px;top:675.94px;color:#1a1a1a">1</div>
<div class="t rw" style="left:1269.6px;top:675.94px;color:#1a1a1a">2600</div>
<div class="t rw" style="left:1349.6px;top:675.94px;color:#1a1a1a">0.8599</div>
<div class="t rw" style="left:1409.6px;top:675.94px;color:#1a1a1a">0.3062</div>
<div class="t rw" style="left:1469.6px;top:675.94px;color:#1a1a1a">-4</div>
<div class="t rw" style="left:1519.6px;top:675.94px;color:#1a1a1a">2605</div>
<div class="a" style="left:1px;top:674px;width:22px;height:19px;border:1px solid #6f6f6f;border-radius:2px;background:linear-gradient(#fbfbfb,#f0f0f0 50%,#dedede);box-shadow:inset 0 0 0 1px #fff"></div>
<svg class="a" style="left:4.5px;top:676.7px" width="13" height="13" viewBox="0 0 13 13"><defs><linearGradient id="rg1" x1="0" y1="0" x2="0" y2="1"><stop offset="0" stop-color="#e86666"/><stop offset="0.45" stop-color="#cc1616"/><stop offset="1" stop-color="#dc1a1a"/></linearGradient></defs><polygon points="9.43,0.95 12.05,3.57 9.12,6.50 12.05,9.43 9.43,12.05 6.50,9.12 3.57,12.05 0.95,9.43 3.88,6.50 0.95,3.57 3.57,0.95 6.50,3.88" fill="url(#rg1)" stroke="#1a0000" stroke-width="1.1" stroke-linejoin="miter"/></svg>
<div class="a" style="left:1165px;top:676px;width:13px;height:13px;border:1px solid #8f8f8f;background:#fff"><div class="a" style="left:1px;top:1px;width:9px;height:9px;background:linear-gradient(135deg,#cfd2d6,#f4f5f6)"></div></div>
<svg class="a" style="left:1165px;top:676px" width="13" height="13" viewBox="0 0 13 13"><path d="M3,6.5L5.3,9.5L10.3,2.8" fill="none" stroke="#3d4f9a" stroke-width="1.8"/></svg>
<div class="a" style="left:1243px;top:674px;width:23px;height:19px;border:1px solid #7a7a7a;border-radius:3px;background:linear-gradient(#fbfbfb,#e6e6e6);box-shadow:inset 0 0 0 1px #fff"></div>
<div class="a" style="left:1246.5px;top:676px;width:15px;height:14px;border:1.5px solid #2d4fd8;background:linear-gradient(170deg,#a4acb4 0 35%,#6a7886 45%,#5f6d7b)"></div>
<div class="a" style="left:1246px;top:675.5px;width:3px;height:3px;background:#1c2a8c;border-radius:1px"></div>
<div class="a" style="left:1260px;top:675.5px;width:3px;height:3px;background:#1c2a8c;border-radius:1px"></div>
<div class="a" style="left:1246px;top:688.5px;width:3px;height:3px;background:#1c2a8c;border-radius:1px"></div>
<div class="a" style="left:1260px;top:688.5px;width:3px;height:3px;background:#1c2a8c;border-radius:1px"></div>
<div class="a" style="left:0px;top:715px;width:1597px;height:1px;background:#a5a5a5"></div>
<div class="a" style="left:23px;top:694px;width:1px;height:21px;background:#a5a5a5"></div>
<div class="a" style="left:1161px;top:694px;width:1px;height:21px;background:#a5a5a5"></div>
<div class="a" style="left:1181px;top:694px;width:1px;height:21px;background:#a5a5a5"></div>
<div class="a" style="left:1241px;top:694px;width:1px;height:21px;background:#a5a5a5"></div>
<div class="a" style="left:1266px;top:694px;width:1px;height:21px;background:#a5a5a5"></div>
<div class="a" style="left:1346px;top:694px;width:1px;height:21px;background:#a5a5a5"></div>
<div class="a" style="left:1406px;top:694px;width:1px;height:21px;background:#a5a5a5"></div>
<div class="a" style="left:1466px;top:694px;width:1px;height:21px;background:#a5a5a5"></div>
<div class="a" style="left:1516px;top:694px;width:1px;height:21px;background:#a5a5a5"></div>
<div class="t rw" style="left:25.9px;top:697.94px;color:#1a1a1a">vi_dev_0_4608_3456_1_12bits_10k_com40.raw</div>
<div class="t rw" style="left:1184.3px;top:697.94px;color:#1a1a1a">1</div>
<div class="t rw" style="left:1269.6px;top:697.94px;color:#1a1a1a">8200</div>
<div class="t rw" style="left:1349.6px;top:697.94px;color:#1a1a1a">0.4084</div>
<div class="t rw" style="left:1409.6px;top:697.94px;color:#1a1a1a">0.6818</div>
<div class="t rw" style="left:1469.6px;top:697.94px;color:#1a1a1a">-3</div>
<div class="t rw" style="left:1519.6px;top:697.94px;color:#1a1a1a">8578</div>
<div class="a" style="left:1px;top:696px;width:22px;height:19px;border:1px solid #6f6f6f;border-radius:2px;background:linear-gradient(#fbfbfb,#f0f0f0 50%,#dedede);box-shadow:inset 0 0 0 1px #fff"></div>
<svg class="a" style="left:4.5px;top:698.7px" width="13" height="13" viewBox="0 0 13 13"><defs><linearGradient id="rg2" x1="0" y1="0" x2="0" y2="1"><stop offset="0" stop-color="#e86666"/><stop offset="0.45" stop-color="#cc1616"/><stop offset="1" stop-color="#dc1a1a"/></linearGradient></defs><polygon points="9.43,0.95 12.05,3.57 9.12,6.50 12.05,9.43 9.43,12.05 6.50,9.12 3.57,12.05 0.95,9.43 3.88,6.50 0.95,3.57 3.57,0.95 6.50,3.88" fill="url(#rg2)" stroke="#1a0000" stroke-width="1.1" stroke-linejoin="miter"/></svg>
<div class="a" style="left:1165px;top:698px;width:13px;height:13px;border:1px solid #8f8f8f;background:#fff"><div class="a" style="left:1px;top:1px;width:9px;height:9px;background:linear-gradient(135deg,#cfd2d6,#f4f5f6)"></div></div>
<svg class="a" style="left:1165px;top:698px" width="13" height="13" viewBox="0 0 13 13"><path d="M3,6.5L5.3,9.5L10.3,2.8" fill="none" stroke="#3d4f9a" stroke-width="1.8"/></svg>
<div class="a" style="left:1243px;top:696px;width:23px;height:19px;border:1px solid #7a7a7a;border-radius:3px;background:linear-gradient(#fbfbfb,#e6e6e6);box-shadow:inset 0 0 0 1px #fff"></div>
<div class="a" style="left:1246.5px;top:698px;width:15px;height:14px;border:1.5px solid #2d4fd8;background:linear-gradient(170deg,#a4acb4 0 35%,#6a7886 45%,#5f6d7b)"></div>
<div class="a" style="left:1246px;top:697.5px;width:3px;height:3px;background:#1c2a8c;border-radius:1px"></div>
<div class="a" style="left:1260px;top:697.5px;width:3px;height:3px;background:#1c2a8c;border-radius:1px"></div>
<div class="a" style="left:1246px;top:710.5px;width:3px;height:3px;background:#1c2a8c;border-radius:1px"></div>
<div class="a" style="left:1260px;top:710.5px;width:3px;height:3px;background:#1c2a8c;border-radius:1px"></div>
<div class="a" style="left:24px;top:716px;width:1573px;height:21px;background:#3399ff"></div>
<div class="a" style="left:0px;top:716px;width:1597px;height:1px;background:repeating-linear-gradient(90deg,#d4761c 0 1px,#5c9ad8 1px 2px)"></div>
<div class="a" style="left:0px;top:736px;width:1597px;height:1px;background:repeating-linear-gradient(90deg,#d4761c 0 1px,#5c9ad8 1px 2px)"></div>
<div class="a" style="left:0px;top:737px;width:1597px;height:1px;background:#a5a5a5"></div>
<div class="a" style="left:23px;top:716px;width:1px;height:21px;background:#a5a5a5"></div>
<div class="a" style="left:1161px;top:716px;width:1px;height:21px;background:#a5a5a5"></div>
<div class="a" style="left:1181px;top:716px;width:1px;height:21px;background:#a5a5a5"></div>
<div class="a" style="left:1241px;top:716px;width:1px;height:21px;background:#a5a5a5"></div>
<div class="a" style="left:1266px;top:716px;width:1px;height:21px;background:#a5a5a5"></div>
<div class="a" style="left:1346px;top:716px;width:1px;height:21px;background:#a5a5a5"></div>
<div class="a" style="left:1406px;top:716px;width:1px;height:21px;background:#a5a5a5"></div>
<div class="a" style="left:1466px;top:716px;width:1px;height:21px;background:#a5a5a5"></div>
<div class="a" style="left:1516px;top:716px;width:1px;height:21px;background:#a5a5a5"></div>
<div class="t rw" style="left:25.9px;top:719.94px;color:#fff">vi_dev_0_4608_3456_1_12bits_2016822153357_ST2891_AG1024_DG1024_ispDG1028.raw</div>
<div class="t rw" style="left:1184.3px;top:719.94px;color:#fff">1</div>
<div class="t rw" style="left:1269.6px;top:719.94px;color:#fff">6000</div>
<div class="t rw" style="left:1349.6px;top:719.94px;color:#fff">0.4963</div>
<div class="t rw" style="left:1409.6px;top:719.94px;color:#fff">0.5935</div>
<div class="t rw" style="left:1469.6px;top:719.94px;color:#fff">9</div>
<div class="t rw" style="left:1519.6px;top:719.94px;color:#fff">5965</div>
<div class="a" style="left:1px;top:718px;width:22px;height:19px;border:1px solid #6f6f6f;border-radius:2px;background:linear-gradient(#fbfbfb,#f0f0f0 50%,#dedede);box-shadow:inset 0 0 0 1px #fff"></div>
<svg class="a" style="left:4.5px;top:720.7px" width="13" height="13" viewBox="0 0 13 13"><defs><linearGradient id="rg3" x1="0" y1="0" x2="0" y2="1"><stop offset="0" stop-color="#e86666"/><stop offset="0.45" stop-color="#cc1616"/><stop offset="1" stop-color="#dc1a1a"/></linearGradient></defs><polygon points="9.43,0.95 12.05,3.57 9.12,6.50 12.05,9.43 9.43,12.05 6.50,9.12 3.57,12.05 0.95,9.43 3.88,6.50 0.95,3.57 3.57,0.95 6.50,3.88" fill="url(#rg3)" stroke="#1a0000" stroke-width="1.1" stroke-linejoin="miter"/></svg>
<div class="a" style="left:1165px;top:720px;width:13px;height:13px;border:1px solid #8f8f8f;background:#fff"><div class="a" style="left:1px;top:1px;width:9px;height:9px;background:linear-gradient(135deg,#cfd2d6,#f4f5f6)"></div></div>
<svg class="a" style="left:1165px;top:720px" width="13" height="13" viewBox="0 0 13 13"><path d="M3,6.5L5.3,9.5L10.3,2.8" fill="none" stroke="#3d4f9a" stroke-width="1.8"/></svg>
<div class="a" style="left:1243px;top:718px;width:23px;height:19px;border:1px solid #7a7a7a;border-radius:3px;background:linear-gradient(#fbfbfb,#e6e6e6);box-shadow:inset 0 0 0 1px #fff"></div>
<div class="a" style="left:1246.5px;top:720px;width:15px;height:14px;border:1.5px solid #2d4fd8;background:linear-gradient(170deg,#a4acb4 0 35%,#6a7886 45%,#5f6d7b)"></div>
<div class="a" style="left:1246px;top:719.5px;width:3px;height:3px;background:#1c2a8c;border-radius:1px"></div>
<div class="a" style="left:1260px;top:719.5px;width:3px;height:3px;background:#1c2a8c;border-radius:1px"></div>
<div class="a" style="left:1246px;top:732.5px;width:3px;height:3px;background:#1c2a8c;border-radius:1px"></div>
<div class="a" style="left:1260px;top:732.5px;width:3px;height:3px;background:#1c2a8c;border-radius:1px"></div>
<div class="a" style="left:0px;top:759px;width:1597px;height:1px;background:#a5a5a5"></div>
<div class="a" style="left:23px;top:738px;width:1px;height:21px;background:#a5a5a5"></div>
<div class="a" style="left:1161px;top:738px;width:1px;height:21px;background:#a5a5a5"></div>
<div class="a" style="left:1181px;top:738px;width:1px;height:21px;background:#a5a5a5"></div>
<div class="a" style="left:1241px;top:738px;width:1px;height:21px;background:#a5a5a5"></div>
<div class="a" style="left:1266px;top:738px;width:1px;height:21px;background:#a5a5a5"></div>
<div class="a" style="left:1346px;top:738px;width:1px;height:21px;background:#a5a5a5"></div>
<div class="a" style="left:1406px;top:738px;width:1px;height:21px;background:#a5a5a5"></div>
<div class="a" style="left:1466px;top:738px;width:1px;height:21px;background:#a5a5a5"></div>
<div class="a" style="left:1516px;top:738px;width:1px;height:21px;background:#a5a5a5"></div>
<div class="t rw" style="left:25.9px;top:741.94px;color:#1a1a1a">vi_dev_0_4608_3456_1_12bits_d50_com40.raw</div>
<div class="t rw" style="left:1184.3px;top:741.94px;color:#1a1a1a">1</div>
<div class="t rw" style="left:1269.6px;top:741.94px;color:#1a1a1a">5000</div>
<div class="t rw" style="left:1349.6px;top:741.94px;color:#1a1a1a">0.5420</div>
<div class="t rw" style="left:1409.6px;top:741.94px;color:#1a1a1a">0.5306</div>
<div class="t rw" style="left:1469.6px;top:741.94px;color:#1a1a1a">6</div>
<div class="t rw" style="left:1519.6px;top:741.94px;color:#1a1a1a">5031</div>
<div class="a" style="left:1px;top:740px;width:22px;height:19px;border:1px solid #6f6f6f;border-radius:2px;background:linear-gradient(#fbfbfb,#f0f0f0 50%,#dedede);box-shadow:inset 0 0 0 1px #fff"></div>
<svg class="a" style="left:4.5px;top:742.7px" width="13" height="13" viewBox="0 0 13 13"><defs><linearGradient id="rg4" x1="0" y1="0" x2="0" y2="1"><stop offset="0" stop-color="#e86666"/><stop offset="0.45" stop-color="#cc1616"/><stop offset="1" stop-color="#dc1a1a"/></linearGradient></defs><polygon points="9.43,0.95 12.05,3.57 9.12,6.50 12.05,9.43 9.43,12.05 6.50,9.12 3.57,12.05 0.95,9.43 3.88,6.50 0.95,3.57 3.57,0.95 6.50,3.88" fill="url(#rg4)" stroke="#1a0000" stroke-width="1.1" stroke-linejoin="miter"/></svg>
<div class="a" style="left:1165px;top:742px;width:13px;height:13px;border:1px solid #8f8f8f;background:#fff"><div class="a" style="left:1px;top:1px;width:9px;height:9px;background:linear-gradient(135deg,#cfd2d6,#f4f5f6)"></div></div>
<div class="a" style="left:1243px;top:740px;width:23px;height:19px;border:1px solid #7a7a7a;border-radius:3px;background:linear-gradient(#fbfbfb,#e6e6e6);box-shadow:inset 0 0 0 1px #fff"></div>
<div class="a" style="left:1246.5px;top:742px;width:15px;height:14px;border:1.5px solid #2d4fd8;background:linear-gradient(170deg,#a4acb4 0 35%,#6a7886 45%,#5f6d7b)"></div>
<div class="a" style="left:1246px;top:741.5px;width:3px;height:3px;background:#1c2a8c;border-radius:1px"></div>
<div class="a" style="left:1260px;top:741.5px;width:3px;height:3px;background:#1c2a8c;border-radius:1px"></div>
<div class="a" style="left:1246px;top:754.5px;width:3px;height:3px;background:#1c2a8c;border-radius:1px"></div>
<div class="a" style="left:1260px;top:754.5px;width:3px;height:3px;background:#1c2a8c;border-radius:1px"></div>
</body></html>
